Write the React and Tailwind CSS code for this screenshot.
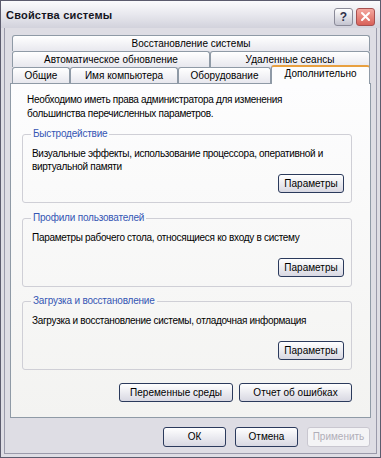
import React from 'react';

const font = { fontFamily: '"Liberation Sans", Arial, sans-serif' };

const Btn = ({ children, className = '', disabled = false }) => (
    <div
        className={`flex items-center justify-center rounded-[3px] border text-[10px] leading-none ${
            disabled
                ? 'border-[#c9c7d0] bg-[#f4f4f6] text-[#b0aeb8]'
                : 'border-[#2b3a5c] bg-gradient-to-b from-white to-[#d8d8e2] text-black'
        } ${className}`}
    >
        {children}
    </div>
);

const Tab = ({ children, className = '' }) => (
    <div
        className={`flex h-[16px] items-center justify-center rounded-t-[3px] border border-b-0 border-[#8f9aa6] bg-gradient-to-b from-white to-[#e8e8ee] text-[10px] leading-none text-black ${className}`}
    >
        {children}
    </div>
);

const Group = ({ title, lines, className = '' }) => (
    <fieldset className={`rounded-[3px] border border-[#cfcfd6] px-[9px] ${className}`}>
        <legend className="ml-[-1px] px-[2px] text-[10px] leading-[14px] tracking-[-0.2px] text-[#3556b4]">{title}</legend>
        <div className="flex h-[61px] flex-col">
            <div className="pt-[6px] text-[10px] leading-[13px] tracking-[-0.3px] text-black">
                {lines.map((l, i) => (
                    <div key={i}>{l}</div>
                ))}
            </div>
            <div className="mt-auto mb-[9px] flex justify-end">
                <Btn className="mr-[-2px] h-[19px] w-[66px]">Параметры</Btn>
            </div>
        </div>
    </fieldset>
);

export default function App() {
    return (
        <div style={font} className="flex h-[458px] w-[381px] flex-col border border-[#5c5c6e] bg-[#dedde4]">
            {/* title bar */}
            <div className="flex h-[27px] items-center bg-gradient-to-b from-[#fbfbfd] via-[#e8e8ee] to-[#d2d2dc] pl-[5px] pr-[5px]">
                <span className="mt-[1px] text-[11px] font-bold tracking-[0.2px] text-[#15151f]">Свойства системы</span>
                <div className="ml-auto mt-[4px] flex gap-[3px]">
                    <div className="flex h-[18px] w-[19px] items-center justify-center rounded-[3px] border border-[#8a8a98] bg-gradient-to-b from-white to-[#c4c4d0] text-[12px] font-bold leading-none text-[#30304a]">
                        ?
                    </div>
                    <div className="flex h-[18px] w-[19px] items-center justify-center rounded-[3px] border border-[#a65050] bg-gradient-to-b from-[#f4a8a0] to-[#d86058]">
                        <svg width="11" height="11" viewBox="0 0 11 11">
                            <path d="M2 2 L9 9 M9 2 L2 9" stroke="white" strokeWidth="2" strokeLinecap="round" />
                        </svg>
                    </div>
                </div>
            </div>

            {/* body */}
            <div className="mx-[3px] mb-[3px] flex flex-1 flex-col border border-t-0 border-[#9a9aaa] px-[5px] pt-[7px]">
                {/* tabs */}
                <div className="flex flex-col pl-[2px] pr-[1px]">
                    <div className="flex">
                        <Tab className="flex-1">Восстановление системы</Tab>
                    </div>
                    <div className="flex">
                        <Tab className="w-[198px]">Автоматическое обновление</Tab>
                        <Tab className="flex-1">Удаленные сеансы</Tab>
                    </div>
                    <div className="flex h-[16px] items-end">
                        <Tab className="w-[58px]">Общие</Tab>
                        <Tab className="w-[108px]">Имя компьютера</Tab>
                        <Tab className="w-[93px]">Оборудование</Tab>
                        <div className="relative z-10 mb-[-1px] flex h-[19px] flex-1 items-start justify-center rounded-t-[3px] border border-b-0 border-t-[2px] border-[#8f9aa6] border-t-[#e8a040] bg-[#fdfdfd] pt-[2px] text-[10px] leading-none text-black">
                            Дополнительно
                        </div>
                    </div>
                </div>

                {/* panel */}
                <div className="flex h-[335px] flex-col border border-[#8f9aa6] bg-gradient-to-b from-[#fdfdfe] to-[#f3f3f1] pl-[11px] pr-[18px] pt-[9px]">
                    <div className="pl-[5px] text-[10px] leading-[14px] tracking-[-0.3px] text-black">
                        <div>Необходимо иметь права администратора для изменения</div>
                        <div>большинства перечисленных параметров.</div>
                    </div>
                    <Group
                        className="mt-[6px]"
                        title="Быстродействие"
                        lines={['Визуальные эффекты, использование процессора, оперативной и', 'виртуальной памяти']}
                    />
                    <Group
                        className="mt-[8px]"
                        title="Профили пользователей"
                        lines={['Параметры рабочего стола, относящиеся ко входу в систему']}
                    />
                    <Group
                        className="mt-[7px]"
                        title="Загрузка и восстановление"
                        lines={['Загрузка и восстановление системы, отладочная информация']}
                    />
                    <div className="mt-[13px] flex justify-end gap-[6px]">
                        <Btn className="h-[19px] w-[114px]">Переменные среды</Btn>
                        <Btn className="h-[19px] w-[113px]">Отчет об ошибках</Btn>
                    </div>
                </div>

                {/* dialog buttons */}
                <div className="mt-[9px] flex justify-end gap-[9px] pr-[1px]">
                    <Btn className="h-[20px] w-[63px]">ОК</Btn>
                    <Btn className="h-[20px] w-[63px]">Отмена</Btn>
                    <Btn disabled className="h-[20px] w-[63px]">Применить</Btn>
                </div>
            </div>
        </div>
    );
}
